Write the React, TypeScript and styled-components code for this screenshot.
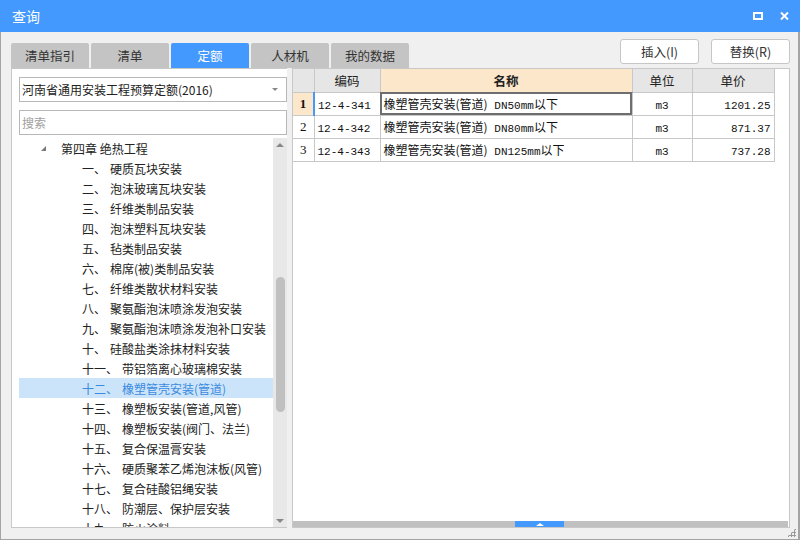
import styled, { createGlobalStyle } from "styled-components";

const GlobalStyle = createGlobalStyle`
  html, body {
    margin: 0;
    padding: 0;
    background: #f0f0f0;
  }
  * {
    box-sizing: border-box;
  }
`;

const Window = styled.div`
  width: 800px;
  height: 540px;
  display: flex;
  flex-direction: column;
  background: #f0f0f0;
  font-family: "Noto Sans CJK SC", "Liberation Sans", sans-serif;
  font-size: 12px;
  color: #222;
  overflow: hidden;
`;

const TitleBar = styled.div`
  height: 32px;
  flex: none;
  background: #4499fe;
  display: flex;
  align-items: center;
  padding: 0 11px 0 12px;
  color: #fff;
  font-size: 14px;
`;

const Title = styled.div`
  flex: 1;
`;

const TitleIcon = styled.span`
  display: flex;
  margin-left: 17px;
`;

const Body = styled.div`
  flex: 1;
  min-height: 0;
  display: flex;
  flex-direction: column;
  padding: 7px 8px 11px 10px;
  border: 1px solid #a4a4a4;
  border-top: none;
  border-right-width: 2px;
  position: relative;
`;

const TopRow = styled.div`
  display: flex;
  align-items: flex-end;
  height: 29px;
  flex: none;
`;

const Tabs = styled.div`
  display: flex;
  gap: 2px;
  flex: 1;
`;

const Tab = styled.div<{ $active?: boolean }>`
  width: 78px;
  height: 25px;
  border-radius: 2px 2px 0 0;
  display: flex;
  align-items: center;
  justify-content: center;
  font-size: 12.5px;
  background: ${(p) => (p.$active ? "#4499fe" : "#c4c4c4")};
  color: ${(p) => (p.$active ? "#fff" : "#333")};
`;

const Buttons = styled.div`
  display: flex;
  gap: 12px;
  align-self: flex-start;
`;

const Button = styled.div`
  width: 79px;
  height: 25px;
  background: #fff;
  border: 1px solid #c6c6c6;
  border-radius: 3px;
  display: flex;
  align-items: center;
  justify-content: center;
  font-size: 12.5px;
  color: #333;
`;

const Content = styled.div`
  flex: 1;
  display: flex;
  gap: 5px;
  min-height: 0;
`;

const LeftPanel = styled.div`
  width: 276px;
  background: #fff;
  border: 1px solid #c8c8c8;
  border-right: none;
  display: flex;
  flex-direction: column;
  padding-top: 8px;
  min-height: 0;
`;

const Field = styled.div<{ $placeholder?: boolean }>`
  height: 25px;
  flex: none;
  margin-left: 7px;
  border: 1px solid #b8b8b8;
  display: flex;
  align-items: center;
  padding: 0 8px 0 2px;
  font-size: 12px;
  color: ${(p) => (p.$placeholder ? "#a0a0a0" : "#222")};
  & + & {
    margin-top: 8px;
  }
`;

const FieldText = styled.span`
  flex: 1;
`;

const Caret = styled.span`
  width: 0;
  height: 0;
  border-left: 3px solid transparent;
  border-right: 3px solid transparent;
  border-top: 3px solid #888;
`;

const TreeArea = styled.div`
  flex: 1;
  display: flex;
  margin-top: 3px;
  min-height: 0;
`;

const TreeList = styled.div`
  flex: 1;
  padding-left: 7px;
  overflow: hidden;
`;

const TreeRow = styled.div<{ $selected?: boolean; $indent: number }>`
  height: 20px;
  display: flex;
  align-items: center;
  padding-left: ${(p) => p.$indent}px;
  font-size: 12px;
  white-space: nowrap;
  background: ${(p) => (p.$selected ? "#cce4fa" : "transparent")};
  color: ${(p) => (p.$selected ? "#3b8be0" : "#222")};
`;

const Expander = styled.span`
  width: 0;
  height: 0;
  border-left: 5px solid transparent;
  border-bottom: 5px solid #777;
  margin-right: 15px;
`;

const Num = styled.span`
  margin-right: 4px;
`;

const VScroll = styled.div`
  width: 14px;
  background: #e8e8e8;
  display: flex;
  flex-direction: column;
  align-items: center;
  padding: 0 1px;
`;

const ScrollArrow = styled.span<{ $down?: boolean }>`
  width: 0;
  height: 0;
  margin: ${(p) => (p.$down ? "auto 0 4px" : "5px 0 0")};
  border-left: 4px solid transparent;
  border-right: 4px solid transparent;
  ${(p) =>
    p.$down ? "border-top: 4px solid #888;" : "border-bottom: 4px solid #888;"}
`;

const VThumb = styled.div`
  width: 9px;
  height: 135px;
  margin-top: 130px;
  border-radius: 5px;
  background: #c0c0c0;
`;

const RightPanel = styled.div`
  flex: 1;
  background: #fff;
  border: 1px solid #c8c8c8;
  display: flex;
  flex-direction: column;
  min-height: 0;
`;

const TableArea = styled.div`
  flex: 1;
`;

const Grid = styled.table`
  border-collapse: collapse;
  table-layout: fixed;
  width: 481px;
`;

const Th = styled.th<{ $w: number; $hl?: boolean }>`
  width: ${(p) => p.$w}px;
  height: 23px;
  padding: 0;
  border: 1px solid #c8c8c8;
  border-top: none;
  background: ${(p) => (p.$hl ? "#fde7cb" : "#e6e6e6")};
  ${(p) => (p.$hl ? "border-bottom: 1px solid #6aa6f0;" : "")}
  font-size: 12.5px;
  font-weight: ${(p) => (p.$hl ? 700 : 400)};
  color: #222;
  &:first-child {
    border-left: none;
  }
`;

const Td = styled.td<{
  $align?: "left" | "center" | "right";
  $rowHead?: boolean;
  $active?: boolean;
  $focus?: boolean;
}>`
  height: 23px;
  padding: 0 3px;
  border: 1px solid #c8c8c8;
  text-align: ${(p) => p.$align || "left"};
  font-family: "Noto Sans CJK SC", sans-serif;
  font-size: 12px;
  white-space: nowrap;
  overflow: hidden;
  color: #111;
  &:first-child {
    border-left: none;
  }
  ${(p) =>
    p.$rowHead
      ? `text-align: center; padding: 0; font-family: "Liberation Serif", serif; font-size: 13px;`
      : ""}
  ${(p) =>
    p.$active
      ? "background: #fde7cb; font-weight: 700; border-right: 2px solid #4499fe;"
      : ""}
  ${(p) => (p.$focus ? "outline: 2px solid #6e6e6e; outline-offset: -2px;" : "")}
`;

const Mono = styled.span<{ $gap?: number }>`
  font-family: "Liberation Mono", monospace;
  font-size: 11px;
  color: #111;
  margin-left: ${(p) => p.$gap || 0}px;
`;

const HScroll = styled.div`
  height: 6px;
  flex: none;
  margin: 0 1px 0 0;
  background: #c0c0c0;
  display: flex;
  padding-left: 222px;
`;

const HThumb = styled.div`
  width: 49px;
  background: #4499fe;
  display: flex;
  justify-content: center;
  align-items: center;
  &::after {
    content: "";
    border-left: 4px solid transparent;
    border-right: 4px solid transparent;
    border-bottom: 3px solid #fff;
  }
`;

const Grip = styled.div`
  position: absolute;
  right: 2px;
  bottom: 2px;
  width: 9px;
  height: 9px;
  background:
    radial-gradient(circle, #9a9a9a 1.2px, transparent 1.3px) 0 0 / 3px 3px;
  clip-path: polygon(100% 0, 100% 100%, 0 100%);
`;

const tree = [
  ["一、", "硬质瓦块安装"],
  ["二、", "泡沫玻璃瓦块安装"],
  ["三、", "纤维类制品安装"],
  ["四、", "泡沫塑料瓦块安装"],
  ["五、", "毡类制品安装"],
  ["六、", "棉席(被)类制品安装"],
  ["七、", "纤维类散状材料安装"],
  ["八、", "聚氨酯泡沫喷涂发泡安装"],
  ["九、", "聚氨酯泡沫喷涂发泡补口安装"],
  ["十、", "硅酸盐类涂抹材料安装"],
  ["十一、", "带铝箔离心玻璃棉安装"],
  ["十二、", "橡塑管壳安装(管道)"],
  ["十三、", "橡塑板安装(管道,风管)"],
  ["十四、", "橡塑板安装(阀门、法兰)"],
  ["十五、", "复合保温膏安装"],
  ["十六、", "硬质聚苯乙烯泡沫板(风管)"],
  ["十七、", "复合硅酸铝绳安装"],
  ["十八、", "防潮层、保护层安装"],
  ["十九、", "防火涂料"],
];

const rows = [
  { code: "12-4-341", dn: "DN50mm", unit: "m3", price: "1201.25" },
  { code: "12-4-342", dn: "DN80mm", unit: "m3", price: "871.37" },
  { code: "12-4-343", dn: "DN125mm", unit: "m3", price: "737.28" },
];

export default function App() {
  return (
    <Window>
      <GlobalStyle />
      <TitleBar>
        <Title>查询</Title>
        <TitleIcon>
          <svg width="10" height="8" viewBox="0 0 10 8">
            <rect x="1" y="1" width="8" height="6" fill="none" stroke="#fff" strokeWidth="2" />
          </svg>
        </TitleIcon>
        <TitleIcon>
          <svg width="9" height="8" viewBox="0 0 9 8">
            <path d="M1 0.5 L8 7.5 M8 0.5 L1 7.5" stroke="#fff" strokeWidth="2" />
          </svg>
        </TitleIcon>
      </TitleBar>
      <Body>
        <TopRow>
          <Tabs>
            <Tab>清单指引</Tab>
            <Tab>清单</Tab>
            <Tab $active>定额</Tab>
            <Tab>人材机</Tab>
            <Tab>我的数据</Tab>
          </Tabs>
          <Buttons>
            <Button>插入(I)</Button>
            <Button>替换(R)</Button>
          </Buttons>
        </TopRow>
        <Content>
          <LeftPanel>
            <Field>
              <FieldText>河南省通用安装工程预算定额(2016)</FieldText>
              <Caret />
            </Field>
            <Field $placeholder>
              <FieldText>搜索</FieldText>
            </Field>
            <TreeArea>
              <TreeList>
                <TreeRow $indent={22}>
                  <Expander />
                  第四章 绝热工程
                </TreeRow>
                {tree.map(([n, t]) => (
                  <TreeRow key={n} $indent={63} $selected={n === "十二、"}>
                    <Num>{n}</Num>
                    {t}
                  </TreeRow>
                ))}
              </TreeList>
              <VScroll>
                <ScrollArrow />
                <VThumb />
                <ScrollArrow $down />
              </VScroll>
            </TreeArea>
          </LeftPanel>
          <RightPanel>
            <TableArea>
              <Grid>
                <thead>
                  <tr>
                    <Th $w={21}></Th>
                    <Th $w={66}>编码</Th>
                    <Th $w={252} $hl>
                      名称
                    </Th>
                    <Th $w={60}>单位</Th>
                    <Th $w={82}>单价</Th>
                  </tr>
                </thead>
                <tbody>
                  {rows.map((r, i) => (
                    <tr key={r.code}>
                      <Td $rowHead $active={i === 0}>
                        {i + 1}
                      </Td>
                      <Td>
                        <Mono>{r.code}</Mono>
                      </Td>
                      <Td $focus={i === 0}>
                        橡塑管壳安装(管道) <Mono $gap={4}>{r.dn}</Mono>以下
                      </Td>
                      <Td $align="center">
                        <Mono>{r.unit}</Mono>
                      </Td>
                      <Td $align="right">
                        <Mono>{r.price}</Mono>
                      </Td>
                    </tr>
                  ))}
                </tbody>
              </Grid>
            </TableArea>
            <HScroll>
              <HThumb />
            </HScroll>
          </RightPanel>
        </Content>
        <Grip />
      </Body>
    </Window>
  );
}
